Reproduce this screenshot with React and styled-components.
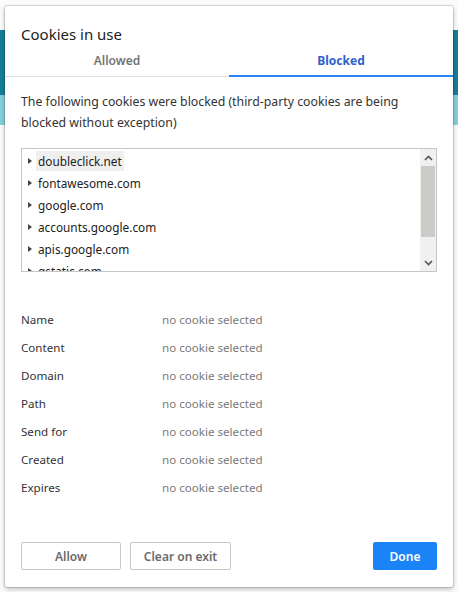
import React from "react";
import styled, { createGlobalStyle } from "styled-components";

const Global = createGlobalStyle`
  html, body { margin: 0; padding: 0; }
  body {
    font-family: "Noto Sans", "Open Sans", sans-serif;
    width: 458px; height: 592px; overflow: hidden;
  }
`;

const Page = styled.div`
  width: 458px;
  height: 592px;
  box-sizing: border-box;
  padding: 6px 5px 5px 5px;
  background:
    linear-gradient(to bottom, transparent 0 30px, #177e98 30px 95px, #86cfdb 95px 125px, transparent 125px),
    #fbfbfb;
`;

const Dialog = styled.div`
  width: 448px;
  height: 581px;
  box-sizing: border-box;
  background: #fff;
  border-radius: 2px;
  box-shadow: 0 0 0 1px rgba(0,0,0,0.12), 0 2px 5px rgba(0,0,0,0.25);
  display: flex;
  flex-direction: column;
`;

const Title = styled.div`
  font-size: 15px;
  color: #222;
  padding: 18px 16px 0 16px;
  height: 26px;
  line-height: 20px;
`;

const Tabs = styled.div`
  display: flex;
  border-bottom: 1px solid #e0e0e0;
`;

const Tab = styled.div`
  flex: 1;
  text-align: center;
  font-size: 12px;
  font-weight: ${(p) => (p.$active ? 700 : 600)};
  color: ${(p) => (p.$active ? "#2f5fcf" : "#757575")};
  height: 24px;
  line-height: 20px;
  padding-top: 1px;
  border-bottom: 2px solid ${(p) => (p.$active ? "#2a84f0" : "transparent")};
  margin-bottom: -1px;
`;

const Body = styled.div`
  padding: 14px 16px 0 16px;
  flex: 1;
  display: flex;
  flex-direction: column;
`;

const Description = styled.p`
  margin: 0;
  font-size: 12.3px;
  line-height: 21px;
  color: #333;
`;

const TreeBox = styled.div`
  margin-top: 15px;
  height: 124px;
  box-sizing: border-box;
  border: 1px solid #c6c6c6;
  display: flex;
  overflow: hidden;
`;

const TreeList = styled.div`
  flex: 1;
  padding: 1px 0 0 6px;
  overflow: hidden;
`;

const TreeItem = styled.div`
  display: flex;
  align-items: center;
  height: 22px;
  font-size: 11.8px;
  color: #222;
`;

const Caret = styled.span`
  width: 0;
  height: 0;
  border-top: 3.5px solid transparent;
  border-bottom: 3.5px solid transparent;
  border-left: 4px solid #444;
  margin-right: 4px;
`;

const ItemLabel = styled.span`
  padding: 2px 2px;
  background: ${(p) => (p.$selected ? "#efefef" : "transparent")};
`;

const Scrollbar = styled.div`
  width: 16px;
  background: #f0f0f0;
  display: flex;
  flex-direction: column;
  align-items: stretch;
`;

const ScrollArrow = styled.div`
  height: 17px;
  display: flex;
  align-items: center;
  justify-content: center;
`;

const ScrollTrack = styled.div`
  flex: 1;
  display: flex;
  flex-direction: column;
`;

const Thumb = styled.div`
  height: 71px;
  margin: 0 1px;
  background: #cdcbc7;
`;

const Details = styled.div`
  margin-top: 33px;
  display: grid;
  grid-template-columns: 141px 1fr;
  grid-auto-rows: 28px;
  font-size: 11.6px;
  align-items: center;
`;

const Label = styled.div`
  color: #333;
`;

const Value = styled.div`
  color: #7a7a7a;
`;

const Footer = styled.div`
  display: flex;
  align-items: center;
  gap: 9px;
  padding: 0 16px 17px 16px;
`;

const Button = styled.button`
  height: 28px;
  box-sizing: border-box;
  padding: 0;
  width: ${(p) => p.$w}px;
  font-family: "Noto Sans", "Open Sans", sans-serif;
  font-size: 12px;
  font-weight: 600;
  border-radius: 2px;
  border: 1px solid ${(p) => (p.$primary ? "#1a84f7" : "#c8c8c8")};
  background: ${(p) => (p.$primary ? "#1a84f7" : "#fff")};
  color: ${(p) => (p.$primary ? "#fff" : "#6b6b6b")};
  margin-left: ${(p) => (p.$push ? "auto" : "0")};
`;

const Chevron = ({ up }) => (
  <svg width="9" height="6" viewBox="0 0 9 6">
    <path
      d={up ? "M1 5 L4.5 1.5 L8 5" : "M1 1 L4.5 4.5 L8 1"}
      fill="none"
      stroke="#555"
      strokeWidth="1.6"
    />
  </svg>
);

const domains = [
  "doubleclick.net",
  "fontawesome.com",
  "google.com",
  "accounts.google.com",
  "apis.google.com",
  "gstatic.com",
];

const fields = ["Name", "Content", "Domain", "Path", "Send for", "Created", "Expires"];

export default function App() {
  return (
    <>
      <Global />
      <Page>
        <Dialog>
          <Title>Cookies in use</Title>
          <Tabs>
            <Tab>Allowed</Tab>
            <Tab $active>Blocked</Tab>
          </Tabs>
          <Body>
            <Description>
              The following cookies were blocked (third-party cookies are being
              blocked without exception)
            </Description>
            <TreeBox>
              <TreeList>
                {domains.map((d, i) => (
                  <TreeItem key={d}>
                    <Caret />
                    <ItemLabel $selected={i === 0}>{d}</ItemLabel>
                  </TreeItem>
                ))}
              </TreeList>
              <Scrollbar>
                <ScrollArrow>
                  <Chevron up />
                </ScrollArrow>
                <ScrollTrack>
                  <Thumb />
                </ScrollTrack>
                <ScrollArrow>
                  <Chevron />
                </ScrollArrow>
              </Scrollbar>
            </TreeBox>
            <Details>
              {fields.map((f) => (
                <React.Fragment key={f}>
                  <Label>{f}</Label>
                  <Value>no cookie selected</Value>
                </React.Fragment>
              ))}
            </Details>
          </Body>
          <Footer>
            <Button $w={100}>Allow</Button>
            <Button $w={101}>Clear on exit</Button>
            <Button $w={64} $primary $push>
              Done
            </Button>
          </Footer>
        </Dialog>
      </Page>
    </>
  );
}
